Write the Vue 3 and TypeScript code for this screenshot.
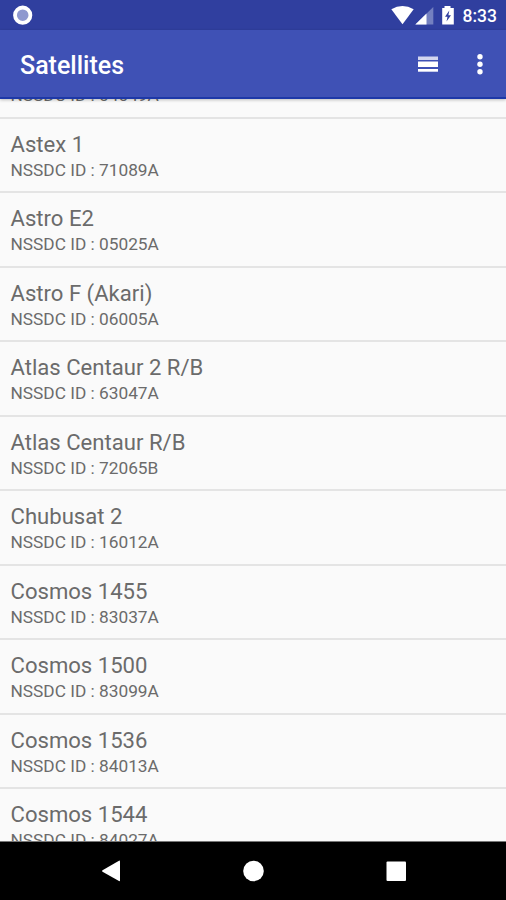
<script setup lang="ts">
interface Satellite {
  name: string
  id: string
}

const satellites: Satellite[] = [
  { name: '', id: '04049A' },
  { name: 'Astex 1', id: '71089A' },
  { name: 'Astro E2', id: '05025A' },
  { name: 'Astro F (Akari)', id: '06005A' },
  { name: 'Atlas Centaur 2 R/B', id: '63047A' },
  { name: 'Atlas Centaur R/B', id: '72065B' },
  { name: 'Chubusat 2', id: '16012A' },
  { name: 'Cosmos 1455', id: '83037A' },
  { name: 'Cosmos 1500', id: '83099A' },
  { name: 'Cosmos 1536', id: '84013A' },
  { name: 'Cosmos 1544', id: '84027A' },
]
</script>

<template>
  <div class="screen">
    <div class="status">
      <svg class="ring" width="20" height="20" viewBox="0 0 20 20">
        <circle cx="9.700" cy="10.200" r="7.700" fill="#8e98cf" stroke="#fff" stroke-width="3.800" />
      </svg>
      <div class="indicators">
        <svg width="66" height="30" viewBox="0 0 66 30">
          <path d="M0.3 9.300Q11.500 2.500 22.700 9.300L11.500 24.200Z" fill="#fff" />
          <path d="M42.300 7V24.600H24.300Z" fill="#7480c0" />
          <path d="M35.500 13.600V24.600H24.300Z" fill="#fff" />
          <path d="M51.200 8H53.500V6H59.500V8H62.800V24.600H51.200Z" fill="#fff" />
          <path d="M58.300 10.500L54 16.700H56.500L55.500 21.500L60 15.200H57.400Z" fill="#303f9f" />
        </svg>
        <span class="clock">8:33</span>
      </div>
    </div>
    <header class="toolbar">
      <h1>Satellites</h1>
      <svg class="list-icon" width="20" height="17" viewBox="0 0 20 17">
        <rect y="0.500" width="20" height="3.500" fill="#d3d6ef" />
        <rect y="5.500" width="20" height="5.500" fill="#fff" />
        <rect y="13" width="20" height="2.700" fill="#fff" />
      </svg>
      <svg width="6" height="22" viewBox="0 0 6 22">
        <circle cx="3" cy="3.800" r="2.700" fill="#fff" />
        <circle cx="3" cy="11.300" r="2.700" fill="#fff" />
        <circle cx="3" cy="18.800" r="2.700" fill="#fff" />
      </svg>
    </header>
    <main class="viewport">
      <ul class="list">
        <li v-for="item in satellites" :key="item.id">
          <div class="name">{{ item.name }}</div>
          <div class="code">NSSDC ID : {{ item.id }}</div>
        </li>
      </ul>
    </main>
    <nav class="nav">
      <svg width="506" height="58" viewBox="0 0 506 58" fill="#fff">
        <path d="M102.500 28.300L119 18.700Q120 18.300 120 19.500V38.300Q120 39.500 119 39.100L102.500 29.800Q101.500 29 102.500 28.300Z" />
        <circle cx="253.500" cy="29" r="10.300" />
        <rect x="386.500" y="19.500" width="19.500" height="19.500" rx="1" />
      </svg>
    </nav>
  </div>
</template>

<style>
body {
  margin: 0;
}
</style>

<style scoped>
.screen {
  display: flex;
  flex-direction: column;
  width: 506px;
  height: 900px;
  overflow: hidden;
  background: #fafafa;
  font-family: Roboto, sans-serif;
}

.status {
  display: flex;
  flex: none;
  align-items: center;
  justify-content: space-between;
  box-sizing: border-box;
  height: 30px;
  padding: 0 9px 0 13px;
  background: #303f9f;
}

.indicators {
  display: flex;
  align-items: center;
  gap: 6px;
  color: #fff;
}

.clock {
  padding-top: 2px;
  font-size: 17.500px;
  font-weight: 500;
  line-height: 28px;
}

.toolbar {
  display: flex;
  z-index: 1;
  flex: none;
  align-items: center;
  box-sizing: border-box;
  height: 69px;
  padding: 0 23px 0 20px;
  border-bottom: 2px solid #1d38a8;
  background: #3f51b5;
  box-shadow: 0 1px 3px rgba(0, 0, 0, 0.25);
  color: #fff;
}

.toolbar h1 {
  flex: 1;
  margin: 5px 0 0;
  font-size: 25px;
  font-weight: 500;
  line-height: 30px;
}

.list-icon {
  margin: 2px 39px 0 0;
}

.viewport {
  flex: 1;
  min-height: 0;
  overflow: hidden;
  border-bottom: 1px solid #777;
}

.list {
  margin: -55px 0 0;
  padding: 0;
  list-style: none;
}

.list li {
  box-sizing: border-box;
  height: 74.540px;
  padding: 11px 10.500px 0;
  border-bottom: 2px solid #e4e4e4;
  color: #6b6b6b;
}

.name {
  height: 28px;
  font-size: 22.100px;
  line-height: 29px;
}

.code {
  font-size: 17.300px;
  line-height: 24px;
}

.nav {
  flex: none;
  height: 58px;
  background: #000;
}

.nav svg {
  display: block;
}
</style>
